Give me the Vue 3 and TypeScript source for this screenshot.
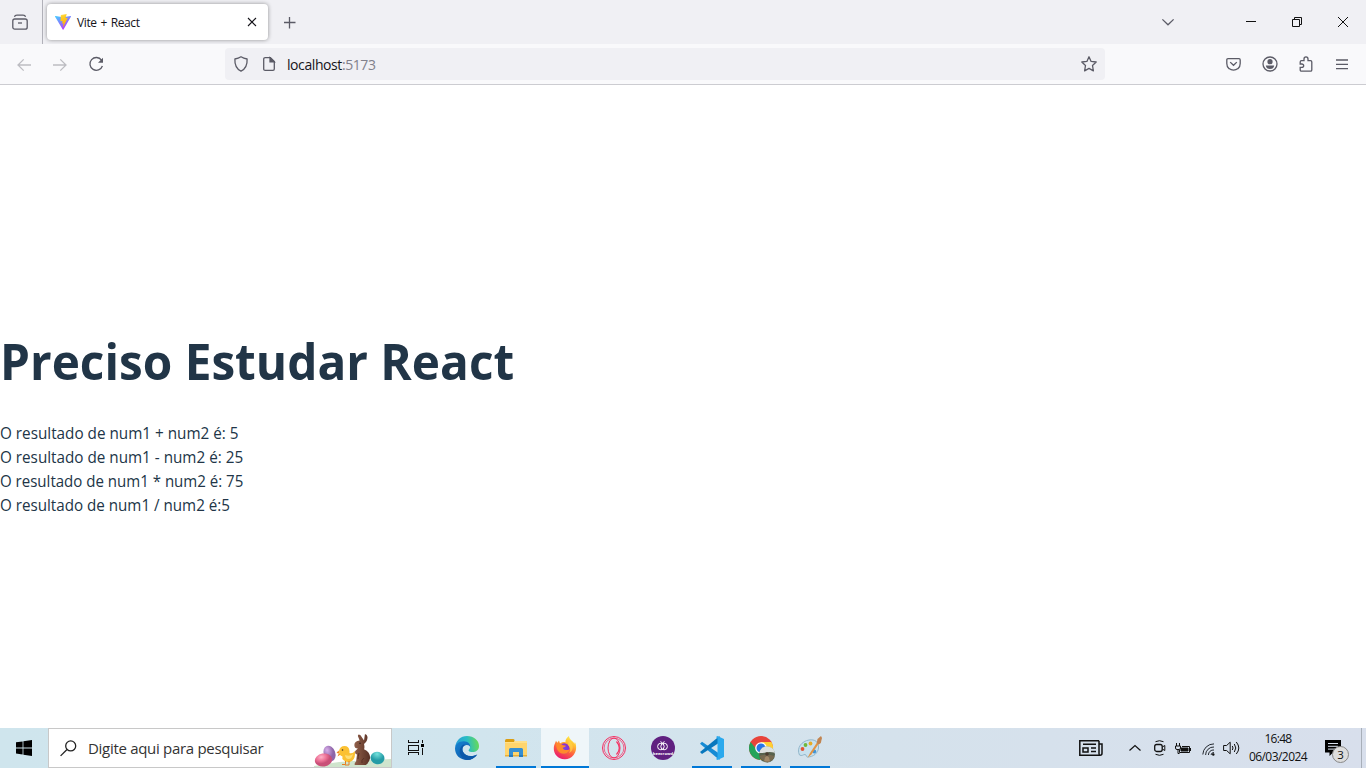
<script setup lang="ts">
interface Operation {
  symbol: string
  label: string
  stretch: number
}

const operations: Operation[] = [
  { symbol: '+', label: 'O resultado de num1 + num2 é: 5', stretch: 0.954 },
  { symbol: '-', label: 'O resultado de num1 - num2 é: 25', stretch: 0.953 },
  { symbol: '*', label: 'O resultado de num1 * num2 é: 75', stretch: 0.94 },
  { symbol: '/', label: 'O resultado de num1 / num2 é:5', stretch: 0.948 },
]
</script>

<template>
  <div class="screen">
    <header class="tabs">
      <div class="library">
        <svg width="16" height="16" viewBox="0 0 16 16" class="line"><path d="M2.500 2.800C2.800 1.200 3.500 1.200 5 1.200h6c1.500 0 2.200 0 2.500 1.600" /><rect x=".8" y="5" width="14.400" height="10.200" rx="2" /><path d="M6 9h4" /></svg>
      </div>
      <div class="tab">
        <svg width="16" height="16" viewBox="0 0 32 32">
          <defs>
            <linearGradient id="va" x1="0" y1="0" x2=".6" y2="1"><stop stop-color="#41d1ff" /><stop offset="1" stop-color="#bd34fe" /></linearGradient>
            <linearGradient id="vb" x1=".4" y1="0" x2=".6" y2="1"><stop stop-color="#ffdd55" /><stop offset=".15" stop-color="#ffd02a" /><stop offset="1" stop-color="#ffa800" /></linearGradient>
          </defs>
          <path fill="url(#va)" d="M31.800 5.300 17 31a.9.9 0 0 1-1.600 0L.2 5.300A.8.8 0 0 1 1.100 4L16 6.600 30.900 4a.8.8 0 0 1 .9 1.300Z" />
          <path fill="url(#vb)" d="M22.800.1 12 2.200a.5.5 0 0 0-.4.4L11 14a.5.5 0 0 0 .6.500l3-.7a.4.4 0 0 1 .5.500l-.9 4.300a.4.4 0 0 0 .5.500l1.900-.6a.4.4 0 0 1 .5.500l-1.400 6.800c-.1.500.4.600.6.200l8.900-17.700a.4.4 0 0 0-.5-.6l-3.100.6a.4.4 0 0 1-.5-.5L23.300.6a.4.4 0 0 0-.5-.5Z" />
        </svg>
        <span class="tab-title">Vite + React</span>
        <svg class="tab-close" width="8" height="8" viewBox="0 0 8 8"><path d="m0 0 8 8M8 0 0 8" fill="none" stroke="#15141a" stroke-width="1.100" /></svg>
      </div>
      <svg class="line new-tab" width="12" height="12" viewBox="0 0 12 12"><path d="M5.500 0v11.500M0 5.500h11.500" /></svg>
      <div class="window-controls">
        <svg class="line" width="12" height="7" viewBox="0 0 12 7"><path d="m.4.4 5.600 5.400L11.600.4" /></svg>
        <svg class="caption" width="10" height="10" viewBox="0 0 10 10"><path d="M0 4.500h10" /></svg>
        <svg class="caption" width="10" height="10" viewBox="0 0 10 10"><path d="M.5 2.500h7v7h-7zM2.500 2.500v-2h7v7h-2" /></svg>
        <svg class="caption" width="10" height="10" viewBox="0 0 10 10"><path d="m0 0 10 10M10 0 0 10" /></svg>
      </div>
    </header>

    <nav class="toolbar">
      <svg class="line faded back" width="15" height="14" viewBox="0 0 15 14"><path d="M14 7H1m5.700-5.600L1 7l5.700 5.600" /></svg>
      <svg class="line faded forward" width="15" height="14" viewBox="0 0 15 14"><path d="M0 7h13M7.300 1.400 13 7l-5.700 5.600" /></svg>
      <svg class="line reload" width="15" height="15" viewBox="0 0 15 15"><path d="M12.500 3.100A6.400 6.400 0 1 0 13.400 9" /><path d="M14 .8v5H9z" fill="#5b5b66" stroke="none" /></svg>
      <div class="address">
        <svg class="line shield" width="14" height="16" viewBox="0 0 14 16"><path d="M7 .8c1.700 1.100 3.600 1.800 6.100 2.200.3 5-1.100 9.700-6.100 12.200C2 12.700.6 8 .9 3 3.400 2.600 5.300 1.900 7 .8Z" stroke-linejoin="round" /></svg>
        <svg class="line page-icon" width="12" height="14" viewBox="0 0 12 14"><path d="M2.200.7h5.200L11.300 4.600V12q0 1.300-1.300 1.300H2.200Q.7 13.300.7 12V2Q.7.700 2.200.7Z" /><path d="M7 .7v4.200h4.300z" fill="#5b5b66" /></svg>
        <span class="url"><b>localhost</b>:5173</span>
        <svg class="line star" width="16" height="16" viewBox="0 0 16 16"><path d="m8 .8 2.100 4.600 5.100.6-3.700 3.500.9 5.400L8 12.400l-4.400 2.500.9-5.400L.8 6l5.100-.6Z" stroke-linejoin="round" /></svg>
      </div>
      <div class="tools">
        <svg class="line" width="15" height="13" viewBox="0 0 15 13"><path d="M2 .7h11q1.200 0 1.200 1.200v3.600q0 3.500-2.200 5.100-2 1.600-4.500 1.600T3 10.600Q.8 9 .8 5.500V1.900Q.8.700 2 .7Z" /><path d="m4.200 4.100 3.300 3.200 3.300-3.200" /></svg>
        <svg class="line" width="16" height="16" viewBox="0 0 16 16"><circle cx="8" cy="8" r="7" /><circle cx="8" cy="5.700" r="2.600" fill="#5b5b66" stroke="none" /><path d="M3.800 9.400h8.400q-.5 3.500-4.200 3.500T3.800 9.400Z" fill="#5b5b66" stroke="none" /></svg>
        <svg class="line" width="14" height="16" viewBox="0 0 14 16"><path d="M2.500 4.700h2.500V3q0-2.200 2-2.200T9 3v1.700h2.500q1.300 0 1.300 1.300v7.900q0 1.300-1.300 1.300h-9q-1.300 0-1.300-1.300v-2.500h1.500q2 0 2-1.700t-2-1.700H1.200V6q0-1.300 1.300-1.300Z" /></svg>
        <svg class="line" width="12" height="11" viewBox="0 0 12 11"><path d="M0 1h12M0 5.300h12M0 9.600h12" /></svg>
      </div>
    </nav>

    <main class="page">
      <h1>Preciso Estudar React</h1>
      <p v-for="op in operations" :key="op.symbol" :style="{ transform: `scaleX(${op.stretch})` }">{{ op.label }}</p>
    </main>

    <footer class="taskbar">
      <div class="start">
        <svg width="16" height="16" viewBox="0 0 16 16"><path d="M0 2.300 6.600 1.400V7.500H0ZM7.400 1.300 16 0v7.500H7.400ZM0 8.400h6.600v6.100L0 13.600ZM7.400 8.400H16V16L7.400 14.700Z" /></svg>
      </div>
      <div class="search">
        <svg class="magnifier" width="17" height="17" viewBox="0 0 17 17"><circle cx="10.700" cy="5.900" r="5" /><path d="M7 9.500.6 15.900" /></svg>
        <span>Digite aqui para pesquisar</span>
        <svg class="easter" width="77" height="36" viewBox="0 0 77 36">
          <defs>
            <radialGradient id="pink" cx=".4" cy=".25"><stop stop-color="#ffb2c8" /><stop offset=".6" stop-color="#ec7196" /><stop offset="1" stop-color="#c94f78" /></radialGradient>
            <radialGradient id="lilac" cx=".4" cy=".25"><stop stop-color="#d8aeea" /><stop offset="1" stop-color="#8e65a9" /></radialGradient>
            <radialGradient id="aqua" cx=".4" cy=".2"><stop stop-color="#75e2dc" /><stop offset="1" stop-color="#249ca6" /></radialGradient>
            <linearGradient id="choc"><stop stop-color="#91604a" /><stop offset="1" stop-color="#573025" /></linearGradient>
          </defs>
          <path d="M0 36v-1q20-4 39-5t38-2v8Z" fill="#cfe4cd" />
          <ellipse cx="15.500" cy="22.500" rx="5.800" ry="8" fill="url(#lilac)" transform="rotate(-20 15.500 22.500)" />
          <ellipse cx="9.500" cy="29" rx="8.700" ry="6.500" fill="url(#pink)" transform="rotate(-10 9.500 29)" />
          <ellipse cx="63.500" cy="27" rx="7" ry="6.200" fill="url(#aqua)" transform="rotate(15 63.500 27)" />
          <path d="m24.500 19.500-2 2.500 3 .5M25 22l-1.500 3.500 3-2" fill="#ef8422" />
          <path d="M25 20q1-5 5.500-5 4.500 0 5 5l0 2q3 1 5.500-2 .5 7-2.500 9.500-4 3-8.500 0-2.500-2-1.500-4-3.500-1-3.500-5.500Z" fill="#fbc133" />
          <path d="M31 24q5 2 8-1-1 5-4.500 5-3 0-3.500-4" fill="#fddd75" />
          <circle cx="28.500" cy="19" r=".8" fill="#443329" /><path d="M31.500 30v3.500H28m7-3.500v4h-4" fill="none" stroke="#e57e23" />
          <path transform="translate(2.500 4.200) scale(.88)" d="M43 11q0-4 6-5l-2-5q0-3 3-1l4 6 1-7q2-1 3 3 0 5-4 8 1 4 0 6 7 3 7 10-1 5-5 8H44q-2-1 1-4l1-8q-3-1-2-4l3-3q-4 0-4-4Z" fill="url(#choc)" />
          <circle cx="46" cy="12.200" r=".7" fill="#211411" /><path d="M45 22q-1 4-1 6m6-1q-3 2-2 5" stroke="#583025" fill="none" />
        </svg>
      </div>
      <div class="task-view">
        <svg width="17" height="15" viewBox="0 0 17 15" shape-rendering="crispEdges"><path d="M.5 0v2.500h10V0M.5 5.500h10v5H.5zM.5 15v-2.500h10V15M14.500 0v3M14.500 8v7" fill="none" stroke="#111" /><path d="M13 4h3v3h-3z" /></svg>
      </div>

      <div class="apps">
        <div class="app">
          <svg width="24" height="24" viewBox="0 0 24 24">
            <defs>
              <linearGradient id="ea" x1="0" y1=".4" x2="1" y2=".3"><stop stop-color="#269bd8" /><stop offset=".5" stop-color="#29bcc5" /><stop offset="1" stop-color="#6bdc52" /></linearGradient>
              <linearGradient id="eb" x1="0" y1="0" x2="1" y2="1"><stop stop-color="#1683d2" /><stop offset="1" stop-color="#0d4fa0" /></linearGradient>
            </defs>
            <path d="M.2 11C1 4.500 5.500 0 12 0c7 0 12 4.500 12 10 0 4-3 6-6.500 6-4 0-4.500-1.500-3.300-2.700 2.300-2.600-.1-7-5-7-4.300 0-7 1.600-9 4.700Z" fill="url(#ea)" />
            <path d="M0 12.500C.2 8 4 5.200 8.800 5.200c4 0 7 2.800 6.400 5.800-.4-1.300-1.700-2-3.300-2C8 9 6.500 12.300 8 15.800c2 4.600 8.300 6 14.200 2.700C20 22 16.500 24 12 24 5 24 0 19 0 12.500Z" fill="url(#eb)" />
            <path d="M8.800 8.500C3.500 11 2.500 20.500 11.500 24 16 24 20 22 22.300 18.500 16 21.300 10.500 20 8.300 16.300 6.700 13.300 7.500 10 10.500 8.900Z" fill="#0b58aa" />
          </svg>
        </div>
        <div class="app running">
          <svg class="explorer" width="22" height="20" viewBox="0 0 22 20">
            <path d="M0 2.500Q0 1 1.500 1H8q1.500 0 1.500 1v2H0Z" fill="#dc9e12" /><path d="M0 4h9l1-1h11q1 0 1 1v14H0Z" fill="#ffd56d" /><path d="M0 4h9l1-1h12v2H0Z" fill="#ffe08a" /><path d="M0 17h22v1.500H0Z" fill="#e9af37" /><path d="M4 11.500Q4 10 5.500 10h11q1.500 0 1.500 1.500V19h-4v-5H8v5H4Z" fill="#368fd2" /><path d="M4 17h4v2H4zm10 0h4v2h-4z" fill="#257bc0" />
          </svg>
        </div>
        <div class="app running active">
          <svg width="24" height="24" viewBox="0 0 24 24">
            <defs>
              <linearGradient id="fa" x1=".8" y1="0" x2=".3" y2="1"><stop stop-color="#fff34d" /><stop offset=".3" stop-color="#ffbd32" /><stop offset=".6" stop-color="#ff653c" /><stop offset="1" stop-color="#e81773" /></linearGradient>
              <radialGradient id="fb"><stop stop-color="#7544ee" /><stop offset="1" stop-color="#8f2fc6" /></radialGradient>
            </defs>
            <path d="M1.300 9 3 4.800l1.300 2L6 4.600l1 3C9 6 11 6 12.500 6.200 12 3.800 14 1.500 16 0c0 3 3 4.500 5 7l.5 1 .4-2c2 4 1.600 9.500-1.300 13C18 22.200 14.800 23.500 11.500 23.300 5 23 .5 18 .8 12q0-1.600.5-3Z" fill="url(#fa)" />
            <circle cx="11.300" cy="12.400" r="5.200" fill="url(#fb)" />
            <path d="M3 7.300c3-.3 5 .2 7 2 1 .3 2 .2 3 .5-.5 1.300-2 1.500-3.300 2 .7 2.500 4 3 6.800 1.400-.4 4-5.800 6-9.500 3.600C4 14.800 3 11 3 7.300Z" fill="#ff8a2c" /><path d="M15 9q4 4 1 8c5-2 5-9 0-12" fill="#ffd348" opacity=".7" />
          </svg>
        </div>
        <div class="app">
          <svg width="24" height="24" viewBox="0 0 24 24" fill="none" stroke="#f52e61"><circle cx="12" cy="12" r="11.500" /><circle cx="12" cy="12" r="9.900" stroke-width=".7" /><ellipse cx="12" cy="12" rx="6" ry="9.900" /><path d="M14.500 5.500c3.500 4 3.500 9 0 13" stroke-width="1.200" /></svg>
        </div>
        <div class="app">
          <svg width="24" height="24" viewBox="0 0 24 24"><circle cx="12" cy="12" r="12" fill="#602080" /><g fill="none" stroke="#fff"><circle cx="9.900" cy="10.500" r="3.300" /><circle cx="13.100" cy="10.500" r="3.300" /><path d="m9.500 5.500 2 1.500 2-1.500" /></g><text x="1.800" y="18.500" textLength="20.400" lengthAdjust="spacingAndGlyphs" fill="#fff" font-size="4" font-weight="bold">beecrowd</text></svg>
        </div>
        <div class="app running">
          <svg width="24" height="24" viewBox="0 0 24 24"><path d="m0 7.800 2-2 17.500 12V24Z" fill="#168bd4" /><path d="m0 16 2 2L19.500 6.500V0Z" fill="#0877bd" /><path d="M17.500 0 24 3v18l-6.500 3-1.500-1 1.500-1.500v-19L16 1Z" fill="#2ba9ed" /></svg>
        </div>
        <div class="app running">
          <svg class="chrome" width="24" height="24" viewBox="0 0 24 24">
            <circle cx="12" cy="12" r="12" fill="#e8443b" /><path d="M1.600 6A12 12 0 0 0 11 24l5-8-8-2Z" fill="#24a35a" /><path d="M11 24A12 12 0 0 0 22.400 6H12l5 9Z" fill="#ffcf32" /><circle cx="12" cy="12" r="5.800" fill="#fff" /><circle cx="12" cy="12" r="4.500" fill="#2975e9" />
            <circle cx="18" cy="18.500" r="8" fill="#58624d" /><path d="M10.100 17a8 8 0 0 1 15.800-.2q-5-1.500-8-.5t-7.800.7" fill="#dce0de" /><path d="M10.500 20q7-3 15 0l-2 4-5 2.500-6-3Z" fill="#776a50" /><circle cx="18" cy="18" r="1.800" fill="#4c3d30" /><path d="m15 25.500 1-4q2-3 4 0l1 4" fill="#a38968" />
          </svg>
        </div>
        <div class="app running">
          <svg width="24" height="24" viewBox="0 0 24 24"><path d="M1.500 19C-2 12 4 5 11 4c6-1 10 2 9.500 8-.5 5-5 9-11 9-1.500 0-.7-2.200-2.500-2.500-2 0-3 2-5.500.5Z" fill="#c8e1ee" stroke="#92b7cb" /><circle cx="7.500" cy="9" r="1.900" fill="#70b83b" /><circle cx="12.500" cy="7.500" r="1.900" fill="#e7ab27" /><circle cx="4.500" cy="13" r="1.900" fill="#e45335" /><circle cx="16.300" cy="15.500" r="1.900" fill="#4194d5" /><path d="m9.500 22 2.500-5 8-12 1.800 1.200-8.300 12Z" fill="#e29343" /><path d="m18.700 7 .8-4L23 0l1 2-1.200 5-2 1.400Z" fill="#c18450" /></svg>
        </div>
      </div>

      <div class="tray">
        <svg class="news" width="24" height="17" viewBox="0 0 24 17" fill="none" stroke="#111" stroke-width="1.500"><path d="M20 .8H.8v14.400H21q2 0 2-2V4h-3v9.500q0 1.700 1 1.700M20 .8V6" /><path d="M4 4.300h13M12 8h5m-5 3.500h5" /><path d="M4 8h5v4H4z" /></svg>
        <svg class="up" width="12" height="8" viewBox="0 0 12 8" fill="none" stroke="#111" stroke-width="1.200"><path d="m.5 6.500 5.500-5 5.500 5" /></svg>
        <svg class="camera" width="12" height="16" viewBox="0 0 12 16" fill="none" stroke="#111"><rect x=".7" y="4.500" width="7.500" height="7" rx="2" stroke-width="1.300" /><path d="m8.300 7 2.500-1.500v5L8.300 9M1.500 1.700q4-2 8 0m-8 12.600q4 2 8 0" /></svg>
        <svg class="battery" width="16" height="11" viewBox="0 0 16 11" fill="none" stroke="#111"><path d="M1.500 0v3m3-3v3M.5 3h5v2q0 1.500-1.500 1.500H2Q.5 6.500.5 5ZM3 6v4.500h1.500M7 3.500h7.500v6H4.500V7M15.500 5v3" /><path d="M6 5h7v3H6z" fill="#111" /></svg>
        <svg class="wifi" width="13" height="13" viewBox="0 0 13 13" fill="none" stroke="#252a31"><path d="M.8 11.500A11 11 0 0 1 12 .9M3.600 12A8 8 0 0 1 12 4M6.400 12A5 5 0 0 1 12 7M9 12a3 3 0 0 1 3-2.500" /><circle cx="11.300" cy="11.500" r="1.200" fill="#111" stroke="none" /></svg>
        <svg class="sound" width="17" height="14" viewBox="0 0 17 14" fill="none" stroke="#111"><path d="M.6 4.500h3L7.200 1.200v11.600L3.600 9.500h-3ZM9.300 5q1.400 2 0 4m2-6q3 4 0 8m2-10q5 6 0 12" /></svg>
        <div class="clock"><span class="time">16:48</span><span class="date">06/03/2024</span></div>
        <div class="action">
          <svg width="16" height="16" viewBox="0 0 16 16"><path d="M0 0h16v12.500H8L4.500 16v-3.500H0Z" /><path d="M3 3.500h10M3 6.300h10M3 9.100h7" stroke="#d7dfec" /></svg>
          <span class="badge">3</span>
        </div>
        <i class="show-desktop"></i>
      </div>
    </footer>
  </div>
</template>

<style>
html, body { margin: 0; overflow: hidden; }
</style>

<style scoped>
.screen { width: 1366px; height: 768px; display: flex; flex-direction: column; overflow: hidden; background: #fff; font-family: "Open Sans", "Noto Sans", sans-serif; }
svg { display: block; flex: none; overflow: visible; }
.line { fill: none; stroke: #5b5b66; stroke-width: 1.3; }
.faded { stroke: #bdbdc2; }
.tabs { height: 44px; flex: none; display: flex; background: #f0f0f4; }
.library { width: 30px; border-right: 1px solid #b1b1b9; padding: 14px 0 0 12px; }
.tab { width: 221px; height: 36px; margin: 4px 0 0 4px; padding: 0 12px 0 8px; box-sizing: border-box; display: flex; align-items: center; background: #fff; border-radius: 4px; box-shadow: 0 0 4px rgba(0, 0, 0, .4); }
.tab-title { margin-left: 6px; font-size: 12px; color: #15141a; letter-spacing: -.38px; word-spacing: 1px; white-space: nowrap; }
.tab-close { margin-left: auto; }
.new-tab { margin: 17px 0 0 16px; }
.window-controls { margin: 17px 18px 0 auto; display: grid; grid-template-columns: 84px 46px 46px 10px; }
.window-controls .line { margin-top: 2px; }
.caption { fill: none; stroke: #111; }
.toolbar { height: 40px; flex: none; display: flex; align-items: center; background: #f9f9fb; border-bottom: 1px solid #ccccd1; }
.back { margin: 1px 0 0 17px; }
.forward { margin: 1px 0 0 21px; }
.reload { margin: 1px 0 0 21px; }
.address { width: 880px; height: 32px; margin-left: 121px; padding: 0 8px 0 9px; box-sizing: border-box; display: flex; align-items: center; background: #f0f0f4; border-radius: 4px; }
.page-icon { margin-left: 15px; }
.url { margin-left: 12px; font-size: 14px; letter-spacing: -.42px; color: #81818b; white-space: nowrap; }
.url b { font-weight: 400; color: #15141a; }
.star { margin-left: auto; }
.tools { margin: 0 18px 0 auto; display: flex; align-items: center; gap: 22px; }
.tools svg:nth-child(1) { margin-right: -1px; }
.tools svg:nth-child(3) { margin-left: -1px; margin-right: 1px; }
.page { height: 643px; flex: none; display: flex; flex-direction: column; align-items: flex-start; justify-content: center; padding-top: 36px; box-sizing: border-box; color: #213547; }
h1 { margin: 0 0 33px; font-size: 51px; line-height: 56px; font-weight: 700; white-space: nowrap; transform: scaleX(.936); transform-origin: left; }
p { margin: 0; font-size: 16px; line-height: 24px; white-space: nowrap; transform-origin: left; }
.taskbar { height: 40px; flex: none; display: flex; background: linear-gradient(90deg, #cfe5ed 0%, #d1e5ee 35%, #d5e2ec 65%, #d8dfec 100%); }
.start { width: 48px; display: grid; place-items: center; }
.search { width: 344px; height: 40px; flex: none; box-sizing: border-box; border: 1px solid #c8c8c8; background: #fff; display: flex; align-items: center; padding-left: 11px; font-size: 15px; letter-spacing: -.3px; color: #333; white-space: nowrap; }
.magnifier { fill: none; stroke: #222; stroke-width: 1.3; margin-right: 11px; }
.easter { margin-left: auto; align-self: flex-end; }
.task-view { width: 48px; padding: 0 0 1px 1px; box-sizing: border-box; display: grid; place-items: center; }
.apps { display: flex; gap: 1px; margin-left: 3px; }
.app { width: 48px; height: 40px; display: grid; place-items: center; box-sizing: border-box; }
.explorer { margin-bottom: 1px; }
.running { background: linear-gradient(#0078d7, #0078d7) center bottom / 40px 2px no-repeat; }
.active { background: linear-gradient(#0078d7, #0078d7) center bottom / 48px 2px no-repeat, #eff6f9; }
.tray { margin-left: auto; width: 287px; display: flex; align-items: center; color: #111; }
.up { margin-left: 26px; }
.camera { margin-left: 13px; }
.battery { margin-left: 9px; }
.wifi { margin: 2px 0 0 11px; }
.sound { margin-left: 8px; }
.clock { width: 76px; display: flex; flex-direction: column; align-items: center; font-size: 12px; line-height: 18px; white-space: nowrap; }
.time { letter-spacing: -.7px; }
.date { letter-spacing: -.55px; }
.action { position: relative; margin-left: 9px; width: 16px; }
.badge { position: absolute; left: 7px; top: 6px; width: 15px; height: 15px; border: 1px solid #888; border-radius: 50%; background: #ddd; font-size: 11.5px; line-height: 15px; text-align: center; }
.show-desktop { width: 4px; height: 40px; margin-left: auto; border-left: 1px solid #a8afb9; }
</style>
